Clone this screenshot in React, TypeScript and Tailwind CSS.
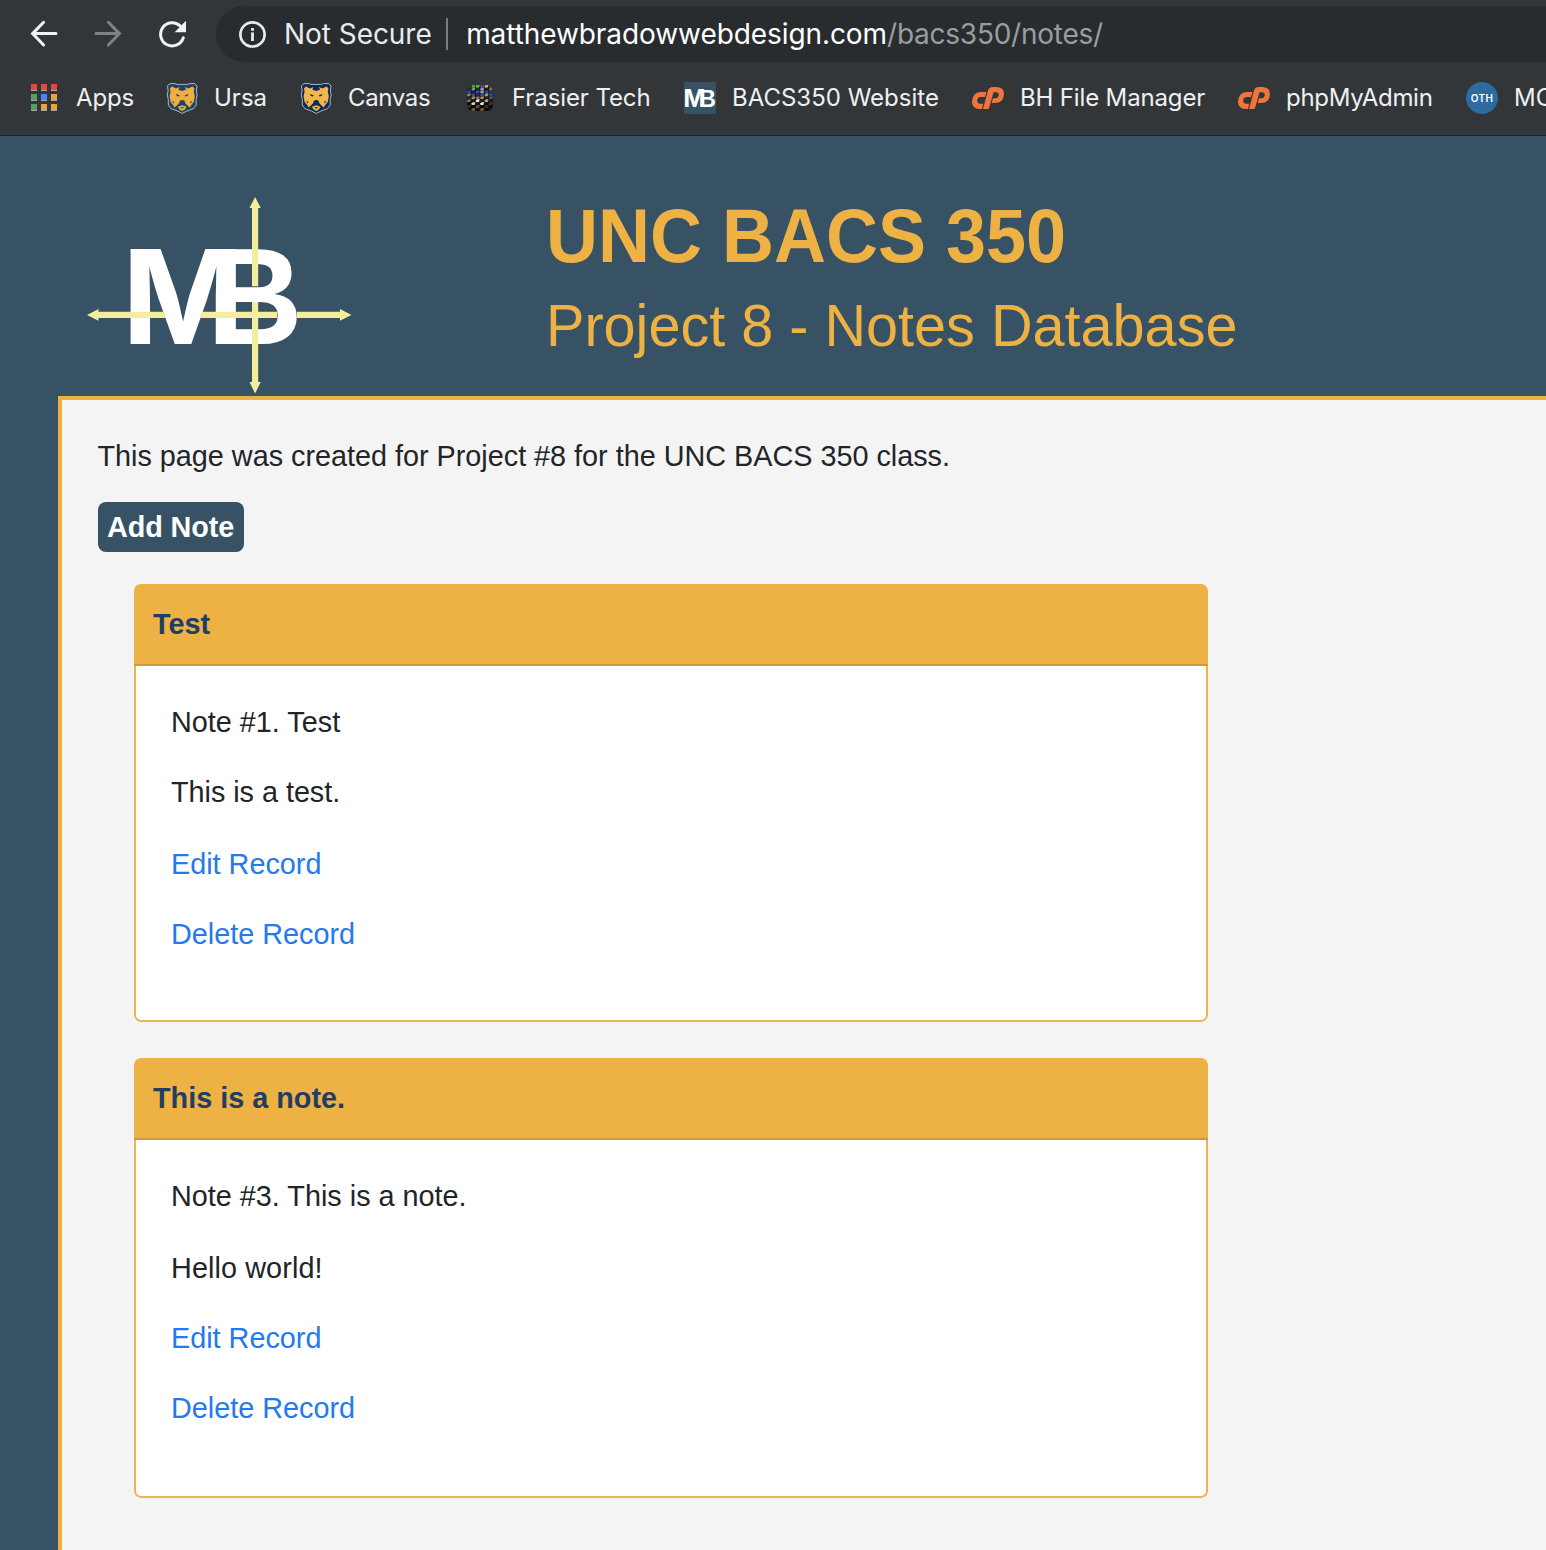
import React from "react";

function BackArrow({ className, flip }: { className: string; flip?: boolean }) {
  return (
    <svg width="32" height="32" viewBox="0 0 32 32" className={flip ? className + " -scale-x-100" : className}>
      <path d="M28 15.6H5.5M15.6 4.3L4.6 15.6L15.6 27" fill="none" stroke="currentColor" strokeWidth="3" strokeLinecap="round" strokeLinejoin="miter" />
    </svg>
  );
}

function Reload() {
  return (
    <svg width="32" height="32" viewBox="0 0 32 32" className="text-[#f1f3f4]">
      <path d="M27.3 19.8A11.6 11.6 0 1 1 24.2 7.9" fill="none" stroke="currentColor" strokeWidth="3" strokeLinecap="round" />
      <path d="M30 2.8V14.2H18.6Z" fill="currentColor" />
    </svg>
  );
}

function Info() {
  return (
    <svg width="28" height="28" viewBox="0 0 28 28" className="text-[#e8eaed]">
      <circle cx="14.5" cy="14.4" r="12.1" fill="none" stroke="currentColor" strokeWidth="2.7" />
      <rect x="13.1" y="8" width="2.8" height="2.8" fill="currentColor" />
      <rect x="13.1" y="12.4" width="2.8" height="8.6" fill="currentColor" />
    </svg>
  );
}

const appColors = ["#e64a3d", "#e64a3d", "#e64a3d", "#569f5f", "#4285f4", "#e8a33a", "#569f5f", "#e8a33a", "#e8a33a"];

function AppsGrid() {
  return (
    <svg width="32" height="32" viewBox="0 0 32 32">
      {appColors.map((c, i) => (
        <g key={i} transform={`translate(${3 + (i % 3) * 10} ${2 + Math.floor(i / 3) * 10})`}>
          <rect width="6" height="7" fill="#a3a5a7" />
          <rect width="6" height="6" fill={c} />
        </g>
      ))}
    </svg>
  );
}

function Bear({ navy, gold }: { navy: string; gold: string }) {
  return (
    <svg width="32" height="32" viewBox="0 0 32 32">
      <path d="M4 1.6H9L11 2.4H21.5L23.5 1.6H28.5L31 3.8L30.4 9L31.2 13L30.2 17.5V23L27.5 26.6L21 29L16.2 31.4L11.5 29L5 26.6L2.3 23V17.5L1.3 13L2.1 9L1.5 3.8Z" fill={navy} stroke="#b9c4cd" strokeWidth="0.9" />
      <path d="M4 6.2L6 4.6L10 6.4L13.4 5L12.4 7.8L16.2 9L20 7.8L19 5L22.4 6.4L26.4 4.6L28.4 6.2L27.8 10L28.8 14L27.8 20L25.4 22.8L23.8 25.6L21 23L19.2 21L18.4 18.6L16.2 18L14 18.6L13.2 21L11.4 23L8.6 25.6L7 22.8L4.6 20L3.6 14L4.6 10Z" fill={gold} />
      <path d="M10 12L13.6 13.2L13 14.4L10.8 13.9ZM22.4 12L18.8 13.2L19.4 14.4L21.6 13.9ZM6 18.8L8.4 20L7.6 21.6ZM26.4 18.8L24 20L24.8 21.6Z" fill={navy} />
      <path d="M11.8 24.8L16.2 23.2L20.6 24.8L18.6 27.8L16.2 29L13.8 27.8Z" fill={gold} />
      <path d="M14 25.2H18.4L16.2 26.8Z" fill={navy} />
    </svg>
  );
}

const cableRows = [
  ["#44443f", "#3dbb2c", "#55c33a", "#8a2bd0", "#9dcb82", "#50504c"],
  ["#262a38", "#8d8d94", "#27272a", "#9c9c9c", "#1d1d1f", "#77777a"],
  ["#2344d2", "#26272c", "#2a4ce0", "#9a9a96", "#2446d6", "#3a3a3c"],
  ["#98804a", "#2848cf", "#2e2e30", "#2d4bd8", "#b79a3c", "#2747cf"],
  ["#25252a", "#b4902e", "#77777a", "#b1922f", "#202022", "#57575a"],
  ["#6e6e70", "#1a1a1b", "#dedede", "#1d1d1e", "#a5a5a5", "#202021"],
  ["#0c0c0c", "#d0d0d0", "#111111", "#e6e6e6", "#0c0c0c", "#39393a"],
  ["#2e2e2f", "#0a0a0a", "#6f4a1f", "#0a0a0a", "#30302f", "#0a0a0a"],
  ["#0a0a0a", "#7f5a20", "#111111", "#7d5526", "#0a0a0a", "#181818"],
];

function Cables() {
  return (
    <svg width="32" height="32" viewBox="0 0 32 32">
      <clipPath id="cables">
        <rect x="3" y="3" width="26" height="26" rx="6" />
      </clipPath>
      <g clipPath="url(#cables)">
        <rect x="3" y="3" width="26" height="26" fill="#121214" />
        {cableRows.map((row, y) =>
          row.map((c, x) => (
            <path key={x + "-" + y} d="M0 1.2L1.6 0H4.2L3.4 2.9H0.6Z" fill={c} transform={`translate(${2.8 + x * 4.4} ${2.8 + y * 2.9})`} />
          ))
        )}
      </g>
    </svg>
  );
}

function Monogram() {
  return (
    <g fill="#fff" fontWeight="700">
      <text x="122" y="344" fontFamily="Inter, sans-serif" fontSize="131">
        M
      </text>
      <text transform="translate(208 344) scale(0.95 1)" fontFamily="Liberation Sans, Arial, sans-serif" fontSize="138">
        B
      </text>
    </g>
  );
}

function SiteIcon() {
  return (
    <svg width="32" height="32" viewBox="0 0 32 32" className="bg-[#365264]">
      <g transform="translate(-22.45 -37.4) scale(0.18)">
        <Monogram />
      </g>
    </svg>
  );
}

function Oth() {
  return (
    <span className="flex size-8 items-center justify-center rounded-full bg-[#2d6a9f] text-[10px] font-semibold tracking-[0.3px] text-white">
      OTH
    </span>
  );
}

function CPanel() {
  return (
    <svg width="32" height="32" viewBox="0 0 32 32" fill="#f0743c">
      <path d="M14.4 10L13.1 15H8.5Q5.5 15.3 5.2 18.5Q5.2 21.4 8 21.7H11.3L9.9 27H7.5Q0.3 26.5 0 20Q0.5 10.5 8.5 10Z" />
      <path d="M11 27L16 8.5Q17 5 20.5 5H25Q32 5.5 32 12Q31.5 21 23 21H19.7L20.9 16.2H23.5Q26.5 16 26.8 13Q26.8 10.5 24 10.3H21.5L17.2 25.5Q16.8 27 15.5 27Z" />
    </svg>
  );
}

const bookmarks = [
  { label: "Apps", icon: <AppsGrid />, width: "w-[138px]", track: "tracking-[-0.15px]" },
  { label: "Ursa", icon: <Bear navy="#1c4569" gold="#efae3f" />, width: "w-[134px]", track: "" },
  { label: "Canvas", icon: <Bear navy="#0c2a5c" gold="#f3b64c" />, width: "w-[164px]", track: "tracking-[-0.35px]" },
  { label: "Frasier Tech", icon: <Cables />, width: "w-[220px]", track: "tracking-[-0.1px]" },
  { label: "BACS350 Website", icon: <SiteIcon />, width: "w-[288px]", track: "" },
  { label: "BH File Manager", icon: <CPanel />, width: "w-[266px]", track: "tracking-[-0.15px]" },
  { label: "phpMyAdmin", icon: <CPanel />, width: "w-[228px]", track: "tracking-[-0.3px]" },
  { label: "MOTH", icon: <Oth />, width: "w-[160px]", track: "" },
];

function BrowserChrome() {
  return (
    <div className="h-[136px] overflow-hidden border-b border-[#202224] bg-[#323639] font-['Inter',sans-serif]">
      <div className="flex h-[68px] items-center pb-[1px] pl-7">
        <BackArrow className="text-[#f1f3f4]" />
        <BackArrow flip className="ml-8 text-[#7f8284]" />
        <div className="ml-8">
          <Reload />
        </div>
        <div className="mt-px ml-7 flex h-14 flex-1 items-center rounded-l-full bg-[#292c2f] pl-[22px] text-[28px] whitespace-nowrap">
          <Info />
          <span className="ml-[18px] tracking-[-0.05px] text-[#e8eaed]">Not Secure</span>
          <span className="ml-[14.5px] h-8 w-0.5 bg-[#7b7e80]" />
          <span className="ml-[18px] tracking-[-0.08px] text-white">matthewbradowwebdesign.com</span>
          <span className="tracking-[-0.24px] text-[#9a9da0]">/bacs350/notes/</span>
        </div>
      </div>
      <div className="flex w-[1700px] pt-3.5 pl-7">
        {bookmarks.map((b) => (
          <div key={b.label} className={"flex shrink-0 items-center gap-4 " + b.width}>
            <span className="size-8 shrink-0">{b.icon}</span>
            <span className={"text-2xl leading-8 whitespace-nowrap text-[#eef0f2] " + b.track}>{b.label}</span>
          </div>
        ))}
      </div>
    </div>
  );
}

function Logo() {
  return (
    <svg width="270" height="200" viewBox="84 195 270 200">
      <Monogram />
      <g fill="#f2ee9b">
        <path d="M87 315L98.5 309V311.8H163.4L165.6 318H98.5V320.8Z" />
        <path d="M201.8 311.8H277V318H199.6Z" />
        <path d="M297 311.8H340V309L351.5 315L340 320.8V318H297Z" />
        <path d="M255.1 197L260.8 208H258.2V286.3H252V208H249.5Z" />
        <path d="M252 302H258.2V382H260.8L255.1 393.5L249.5 382H252Z" />
      </g>
    </svg>
  );
}

const notes = [
  {
    title: "Test",
    height: "h-[438px]",
    rows: [
      { text: "Note #1. Test", style: "h-[70px]" },
      { text: "This is a test.", style: "h-[72px] tracking-[-0.03px]" },
    ],
  },
  {
    title: "This is a note.",
    height: "h-[440px]",
    rows: [
      { text: "Note #3. This is a note.", style: "h-[72px]" },
      { text: "Hello world!", style: "h-[70px] tracking-[0.1px]" },
    ],
  },
];

export default function App() {
  return (
    <div className="flex h-[1550px] w-[1546px] flex-col overflow-hidden bg-[#365264]">
      <BrowserChrome />
      <header className="flex h-[260px] shrink-0 pl-[84px] font-['Liberation_Sans',Arial,sans-serif] text-[#edb144]">
        <div className="w-[462px] pt-[59px]">
          <Logo />
        </div>
        <div className="pt-[61px]">
          <h1 className="origin-[0_65px] scale-y-[1.05] text-[72px] leading-[80px] font-bold">UNC BACS 350</h1>
          <h2 className="mt-[17px] origin-[0_52px] scale-y-[1.03] text-[57.6px] leading-[64px]">Project 8 - Notes Database</h2>
        </div>
      </header>
      <main className="ml-[58px] flex-1 border-t-4 border-l-4 border-[#edb144] bg-[#f4f4f4] pt-[34px] pl-9 font-['Liberation_Sans',Arial,sans-serif] text-[28.8px] leading-[44px] text-[#212529]">
        <p className="-ml-[0.5px] tracking-[-0.01px]">This page was created for Project #8 for the UNC BACS 350 class.</p>
        <button className="mt-6 flex h-[50px] w-[146px] items-center rounded-lg bg-[#365264] pl-[9px] font-bold tracking-[-0.1px] whitespace-nowrap text-white">Add Note</button>
        <div className="mt-8 ml-9 flex w-[1074px] flex-col gap-9">
          {notes.map((n) => (
            <article key={n.title} className={"flex flex-col overflow-hidden rounded-[7px] " + n.height}>
              <div className="flex h-[82px] shrink-0 items-center border-b-2 border-[#cd9b3f] bg-[#edb144] pl-[19px] font-bold text-[#1f3e64]">{n.title}</div>
              <div className="flex-1 rounded-b-[7px] border-x-2 border-b-2 border-[#e9b451] bg-white pt-[34px] pl-[35px]">
                {n.rows.map((r) => (
                  <p key={r.text} className={r.style}>{r.text}</p>
                ))}
                <p className="h-[70px] text-[#2478f0]">Edit Record</p>
                <p className="text-[#2478f0]">Delete Record</p>
              </div>
            </article>
          ))}
        </div>
      </main>
    </div>
  );
}
